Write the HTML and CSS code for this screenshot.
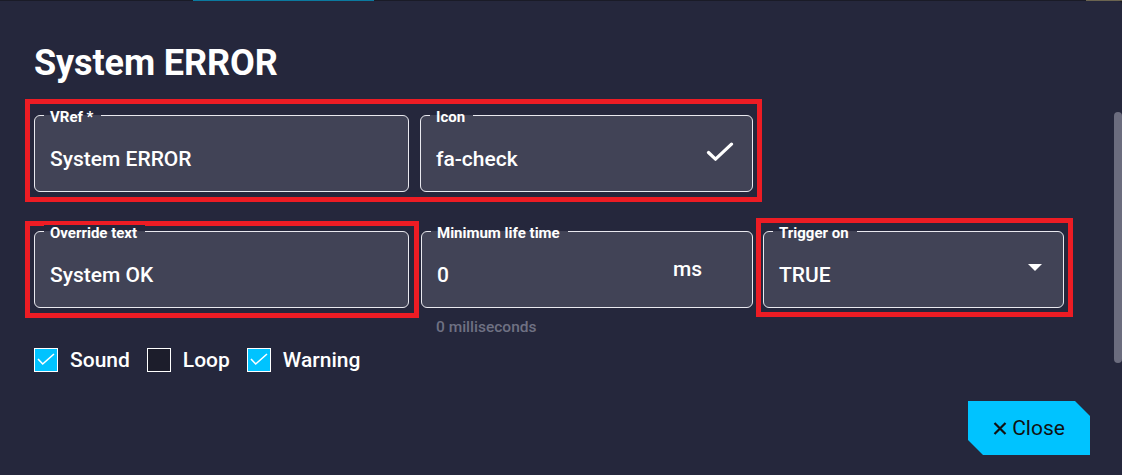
FILE: index.html
```html
<!DOCTYPE html>
<html lang="en">
<head>
<meta charset="utf-8">
<title>System ERROR</title>
<link rel="stylesheet" href="styles.css">
</head>
<body>
<div class="topstrip">
  <div class="strip-a"></div>
  <div class="strip-b"></div>
  <div class="strip-c"></div>
  <div class="strip-d"></div>
</div>
<div class="dialog">
  <h1 class="title">System ERROR</h1>

  <div class="row1 hl">
    <div class="field f-vref">
      <span class="label">VRef *</span>
      <span class="value">System ERROR</span>
    </div>
    <div class="field f-icon">
      <span class="label">Icon</span>
      <span class="value">fa-check</span>
      <svg class="check-icon" width="28" height="20" viewBox="0 0 28 20"><path d="M2.5 10.5 L9.5 17.2 L25.5 2.2" fill="none" stroke="#fff" stroke-width="3.2" stroke-linecap="round" stroke-linejoin="round"/></svg>
    </div>
  </div>

  <div class="row2">
    <div class="hl box-override">
      <div class="field f-override">
        <span class="label">Override text</span>
        <span class="value">System OK</span>
      </div>
    </div>
    <div class="col-life">
      <div class="field f-life">
        <span class="label">Minimum life time</span>
        <span class="value">0</span>
        <span class="unit">ms</span>
      </div>
      <div class="helper">0 milliseconds</div>
    </div>
    <div class="hl box-trigger">
      <div class="field f-trigger">
        <span class="label">Trigger on</span>
        <span class="value">TRUE</span>
        <span class="caret"></span>
      </div>
    </div>
  </div>

  <div class="checks">
    <label class="check"><span class="cb on"><svg width="22" height="22" viewBox="0 0 22 22"><path d="M3 10 L7.7 15 L19 5" fill="none" stroke="#fff" stroke-width="1.6"/></svg></span><span>Sound</span></label>
    <label class="check"><span class="cb"></span><span>Loop</span></label>
    <label class="check"><span class="cb on"><svg width="22" height="22" viewBox="0 0 22 22"><path d="M3 10 L7.7 15 L19 5" fill="none" stroke="#fff" stroke-width="1.6"/></svg></span><span>Warning</span></label>
  </div>

  <div class="actions">
    <button class="close-btn"><svg width="14" height="13" viewBox="0 0 14 13"><path d="M1.5 1 L12.5 12 M12.5 1 L1.5 12" stroke="#111" stroke-width="2.2"/></svg><span>Close</span></button>
  </div>

  <div class="scroll-thumb"></div>
</div>
</body>
</html>
```

FILE: styles.css
```css
html, body {
  margin: 0;
  padding: 0;
}
body {
  width: 1122px;
  height: 475px;
  overflow: hidden;
  background: #1a1b27;
  font-family: Roboto, "Liberation Sans", sans-serif;
  color: #fff;
}
.topstrip {
  display: flex;
  height: 1px;
  background: #1a1b27;
}
.strip-a { width: 193px; }
.strip-b { width: 181px; background: #0b7aa0; }
.strip-c { flex: 1; }
.strip-d { width: 36px; background: #6b6450; }

.dialog {
  position: relative;
  height: 474px;
  background: #25273c;
  border-top-right-radius: 4px;
  padding-left: 25px;
  box-sizing: border-box;
}
.title {
  margin: 0 0 0 9px;
  padding-top: 42px;
  height: 40px;
  font-size: 36px;
  line-height: 40px;
  font-weight: 700;
  letter-spacing: -0.1px;
}

.hl {
  border: 5px solid #ed1c24;
  box-sizing: border-box;
}

.row1 {
  margin-top: 16px;
  width: 737px;
  height: 103px;
  display: flex;
  gap: 11px;
  padding: 11px 4px 5px 4px;
}

.field {
  position: relative;
  box-sizing: border-box;
  height: 77px;
  border: 1px solid #e9e9ef;
  border-radius: 6px;
  background: #414356;
  display: flex;
  align-items: center;
  padding: 10px 15px 0 15px;
}
.label {
  position: absolute;
  left: 9px;
  top: -7px;
  padding: 0 8px 0 6px;
  font-size: 15px;
  line-height: 16px;
  font-weight: 700;
  background: linear-gradient(#25273c 0, #25273c 6px, #414356 6px);
}
.value {
  font-size: 21px;
  font-weight: 500;
  flex: 1;
}
.f-vref { width: 375px; }
.f-icon { width: 333px; padding-right: 18px; }
.check-icon { display: block; margin-top: -14px; }

.row2 {
  margin-top: 16px;
  display: flex;
  align-items: flex-start;
}
.box-override {
  margin-top: 3px;
  width: 394px;
  height: 97px;
  padding: 5px 5px 5px 4px;
}
.f-override { width: 375px; }
.col-life {
  margin-left: 2px;
  margin-top: 13px;
}
.f-life { width: 332px; padding-right: 50px; }
.unit {
  font-size: 21px;
  font-weight: 500;
  margin-top: -12px;
}
.helper {
  margin-top: 11px;
  padding-left: 15px;
  font-size: 15.5px;
  line-height: 16px;
  font-weight: 500;
  color: #6f7183;
}
.box-trigger {
  margin-left: 3px;
  width: 317px;
  height: 99px;
  padding: 8px 4px 4px 2px;
}
.f-trigger { width: 301px; padding-right: 21px; }
.caret {
  width: 0;
  height: 0;
  border-left: 7px solid transparent;
  border-right: 7px solid transparent;
  border-top: 7px solid #fff;
  margin-top: -14px;
}

.checks {
  margin: 13px 0 0 9px;
  display: flex;
  align-items: center;
}
.check {
  display: flex;
  align-items: center;
  gap: 12px;
  margin-right: 17px;
  font-size: 21px;
  line-height: 24px;
  font-weight: 500;
}
.cb {
  box-sizing: border-box;
  width: 24px;
  height: 24px;
  border: 1px solid #fff;
  background: #1c1d2b;
  display: flex;
}
.cb.on { background: #00c3ff; }

.actions {
  margin-top: 29px;
  display: flex;
  justify-content: flex-end;
  padding-right: 32px;
}
.close-btn {
  width: 122px;
  height: 54px;
  border: 0;
  background: #00c3ff;
  clip-path: polygon(0 0, 107px 0, 122px 15px, 122px 54px, 15px 54px, 0 39px);
  display: flex;
  align-items: center;
  justify-content: center;
  gap: 5px;
  font-family: Roboto, "Liberation Sans", sans-serif;
  font-size: 21px;
  font-weight: 400;
  color: #111;
  padding: 0 0 0 0;
}

.scroll-thumb {
  position: absolute;
  right: 0;
  top: 111px;
  width: 8px;
  height: 251px;
  border-radius: 4px;
  background: #6b6c7e;
}
```
